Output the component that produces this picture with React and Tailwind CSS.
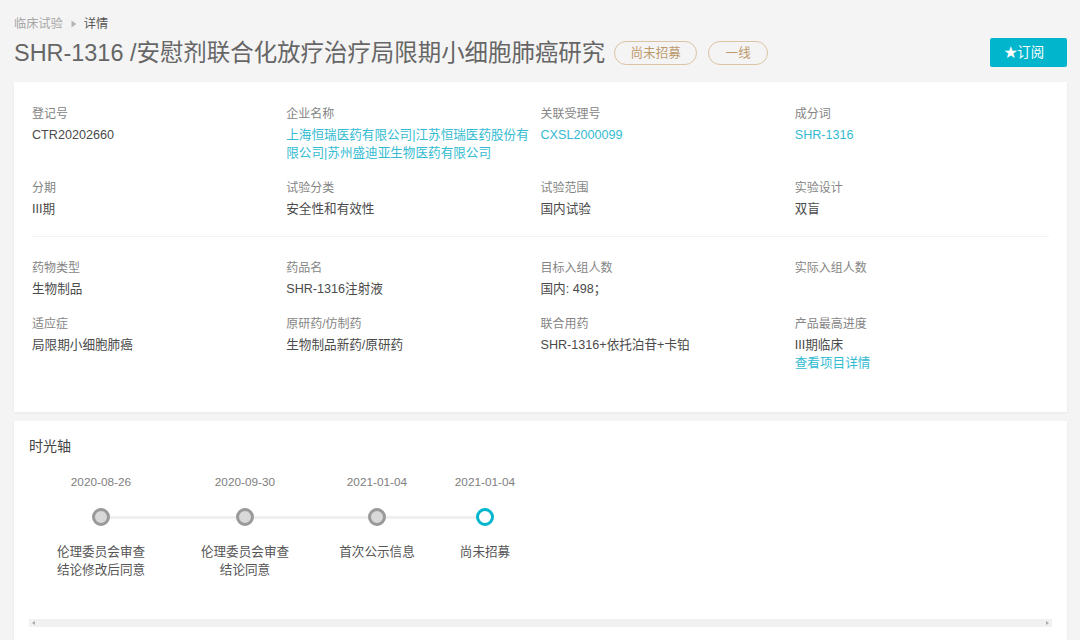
const FONT = "font-['Liberation_Sans','Noto_Sans_CJK_SC',sans-serif]";

function Field({ label, children }) {
  return (
    <div className="pr-2">
      <div className="text-[12px] leading-[18px] text-[#858585]">{label}</div>
      <div className="mt-[3px] text-[12.6px] leading-[18px] text-[#4a4a4a]">{children}</div>
    </div>
  );
}

const Link = ({ children }) => <span className="text-[#33bbd1]">{children}</span>;

function Grid({ children }) {
  return <div className="grid grid-cols-4 gap-y-[17px]">{children}</div>;
}

const steps = [
  { date: "2020-08-26", lines: ["伦理委员会审查", "结论修改后同意"], w: "w-[144px]" },
  { date: "2020-09-30", lines: ["伦理委员会审查", "结论同意"], w: "w-[144px]" },
  { date: "2021-01-04", lines: ["首次公示信息"], w: "w-[120px]" },
  { date: "2021-01-04", lines: ["尚未招募"], w: "w-[96px]", current: true },
];

const offsets = ["w-[144px]", "w-[132px]", "w-[108px]"];

export default function App() {
  return (
    <div className={`${FONT} h-[640px] w-[1080px] overflow-hidden bg-[#f4f4f4] pl-[14px] pr-[13px] pt-[15px]`}>
      <div className="flex h-[18px] items-center text-[12.2px] leading-[18px]">
        <span className="text-[#a6a6a6]">临床试验</span>
        <svg width="6" height="8" viewBox="0 0 6 8" className="mr-[7px] ml-[8px]">
          <path d="M0.5 0.5 L5.5 4 L0.5 7.5 Z" fill="#b5b5b5" />
        </svg>
        <span className="text-[#555]">详情</span>
      </div>
      <div className="mt-[5px] flex h-[29px] items-center">
        <h1 className="mt-[2px] text-[23.45px] leading-[29px] font-normal whitespace-nowrap text-[#666]">
          SHR-1316 /安慰剂联合化放疗治疗局限期小细胞肺癌研究
        </h1>
        <span className="mt-px ml-[9px] flex h-[24px] w-[83px] items-center justify-center rounded-full border border-[#dcc3a3] text-[12.6px] text-[#bd9a6c]">
          尚未招募
        </span>
        <span className="mt-px ml-[11px] flex h-[24px] w-[60px] items-center justify-center rounded-full border border-[#dcc3a3] text-[12.6px] text-[#bd9a6c]">
          一线
        </span>
        <button className="ml-auto flex h-[29px] w-[77px] items-center justify-center rounded-[2px] bg-[#00b5cc] pt-[2px] pr-[9px] text-[13.4px] text-white">
          ★订阅
        </button>
      </div>

      <div className="mt-[15px] h-[330px] bg-white px-[18px] pt-[23px] shadow-[0_1px_3px_rgba(0,0,0,0.05)]">
        <Grid>
          <Field label="登记号">CTR20202660</Field>
          <Field label="企业名称">
            <Link>上海恒瑞医药有限公司|江苏恒瑞医药股份有限公司|苏州盛迪亚生物医药有限公司</Link>
          </Field>
          <Field label="关联受理号"><Link>CXSL2000099</Link></Field>
          <Field label="成分词"><Link>SHR-1316</Link></Field>
          <Field label="分期">III期</Field>
          <Field label="试验分类">安全性和有效性</Field>
          <Field label="试验范围">国内试验</Field>
          <Field label="实验设计">双盲</Field>
        </Grid>
        <div className="mt-[18px] mb-[22px] h-px bg-[#f2f2f2]" />
        <Grid>
          <Field label="药物类型">生物制品</Field>
          <Field label="药品名">SHR-1316注射液</Field>
          <Field label="目标入组人数">国内: 498；</Field>
          <Field label="实际入组人数"></Field>
          <Field label="适应症">局限期小细胞肺癌</Field>
          <Field label="原研药/仿制药">生物制品新药/原研药</Field>
          <Field label="联合用药">SHR-1316+依托泊苷+卡铂</Field>
          <Field label="产品最高进度">
            III期临床
            <br />
            <Link>查看项目详情</Link>
          </Field>
        </Grid>
      </div>

      <div className="mt-[9px] h-[240px] bg-white px-[15px] pt-[15px] shadow-[0_1px_3px_rgba(0,0,0,0.05)]">
        <div className="text-[14px] leading-[20px] text-[#444]">时光轴</div>
        <div className="mt-[17px] flex h-[142px]">
          {steps.map((s, i) => (
            <div key={i} className={`${s.w} relative flex shrink-0 flex-col items-center`}>
              <div className="text-[11.8px] leading-[18px] text-[#808080]">{s.date}</div>
              {i < 3 && (
                <div className={`absolute top-[43px] left-1/2 h-[3px] bg-[#f0f0f0] ${offsets[i]}`} />
              )}
              <div
                className={`relative mt-[17px] box-border h-[18px] w-[18px] rounded-full border-[3px] ${
                  s.current ? "border-[#00b5cc] bg-white" : "border-[#999] bg-[#d8d8d8]"
                }`}
              />
              <div className="mt-[17px] text-center text-[12.6px] leading-[18px] text-[#555]">
                {s.lines.map((l) => (
                  <div key={l}>{l}</div>
                ))}
              </div>
            </div>
          ))}
        </div>
        <div className="mt-[4px] flex h-[8px] w-[1023px] items-center justify-between bg-[#f1f1f1] px-[3px]">
          <svg width="3" height="4" viewBox="0 0 3 4"><path d="M3 0 L0 2 L3 4 Z" fill="#aaa" /></svg>
          <svg width="3" height="4" viewBox="0 0 3 4"><path d="M0 0 L3 2 L0 4 Z" fill="#aaa" /></svg>
        </div>
      </div>
    </div>
  );
}
